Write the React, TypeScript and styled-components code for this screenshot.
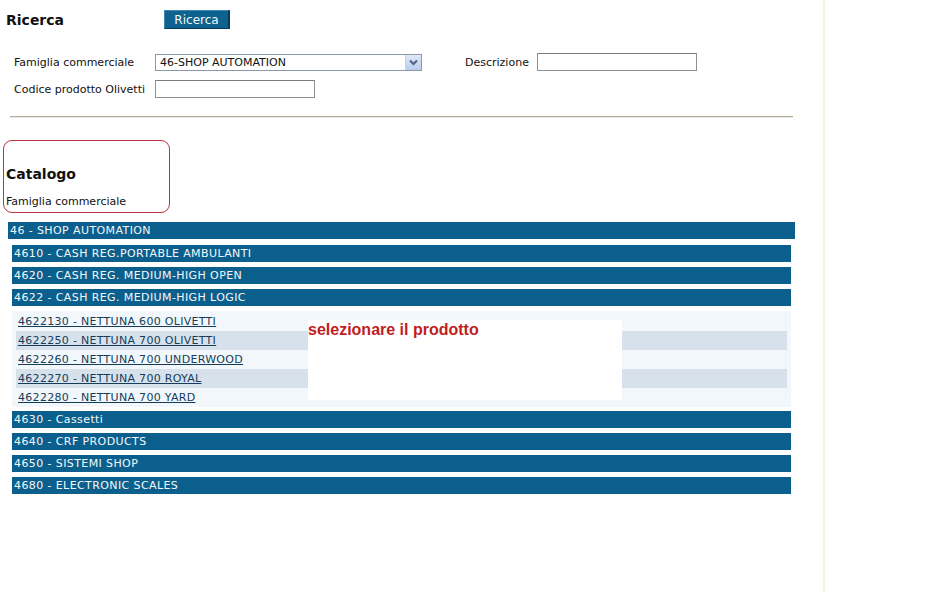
import React from "react";
import styled, { createGlobalStyle } from "styled-components";

const Global = createGlobalStyle`
  html, body { margin: 0; padding: 0; background: #ffffff; }
  body { font-family: "DejaVu Sans", Verdana, sans-serif; font-size: 11px; color: #000; }
`;

const Page = styled.div`
  width: 823px;
  min-height: 592px;
  border-right: 2px solid #f3f0e4;
  box-sizing: content-box;
`;

const Header = styled.div`
  display: flex;
  align-items: center;
  padding: 10px 0 0 6px;
  height: 19px;
`;

const Title = styled.h1`
  margin: 0;
  width: 158px;
  flex: none;
  font-size: 14px;
  font-weight: bold;
  color: #111;
`;

const SearchButton = styled.button`
  width: 66px;
  height: 19px;
  padding: 0;
  background: #0d6290;
  color: #f4f8fb;
  font-family: "DejaVu Sans", Verdana, sans-serif;
  font-size: 12px;
  border: none;
  border-right: 2px solid #0a3c5a;
  border-bottom: 1px solid #0a3c5a;
  border-top: 1px solid #3f86b0;
  border-left: 1px solid #3f86b0;
`;

const Form = styled.div`
  display: flex;
  flex-direction: column;
  gap: 9px;
  margin-top: 24px;
`;

const FormRow = styled.div`
  display: flex;
  align-items: center;
  height: 18px;
`;

const Label = styled.span<{ $w: number; $pl?: number }>`
  flex: none;
  width: ${(p) => p.$w}px;
  padding-left: ${(p) => p.$pl ?? 0}px;
  box-sizing: border-box;
  color: #111;
  white-space: nowrap;
`;

const SelectBox = styled.div`
  flex: none;
  width: 267px;
  height: 17px;
  border: 1px solid #8c99a8;
  box-sizing: border-box;
  display: flex;
  align-items: center;
  justify-content: space-between;
  padding-left: 4px;
  background: #fff;
  color: #111;
`;

const SelectArrow = styled.div`
  width: 15px;
  height: 15px;
  background: linear-gradient(#dfe9f8, #b9cdec);
  border-left: 1px solid #c3d2ea;
  display: flex;
  align-items: center;
  justify-content: center;
`;

const TextInput = styled.div<{ $w: number }>`
  flex: none;
  width: ${(p) => p.$w}px;
  height: 18px;
  border: 1px solid #8f9090;
  border-top-color: #7c7c7c;
  box-sizing: border-box;
  background: #fff;
`;

const Spacer = styled.div<{ $w: number }>`
  width: ${(p) => p.$w}px;
  flex: none;
`;

const Divider = styled.div`
  margin: 18px 0 0 10px;
  width: 783px;
  border-top: 1px solid #b2aa98;
  border-bottom: 1px solid #ece8df;
`;

const CatalogBox = styled.div`
  margin: 22px 0 0 3px;
  width: 167px;
  height: 73px;
  border: 1px solid #c0303c;
  border-radius: 9px;
  box-sizing: border-box;
  padding: 25px 0 0 2px;
`;

const CatalogTitle = styled.h2`
  margin: 0;
  font-size: 14px;
  font-weight: bold;
  color: #111;
`;

const CatalogSub = styled.div`
  margin-top: 13px;
  color: #111;
`;

const Tree = styled.div`
  margin: 9px 0 0 8px;
  width: 787px;
  display: flex;
  flex-direction: column;
`;

const Bar = styled.div<{ $sub?: boolean; $top?: number }>`
  height: 17px;
  line-height: 18px;
  background: #0b5f8c;
  color: #f4f8fb;
  padding-left: 2px;
  margin: ${(p) => (p.$sub ? `${p.$top ?? 5}px 4px 0 4px` : "0")};
  letter-spacing: 0.4px;
  white-space: nowrap;
`;

const ProductList = styled.div`
  position: relative;
  margin: 5px 4px 0 4px;
  padding: 1px 4px 0 4px;
  background: #f2f7fb;
  display: flex;
  flex-direction: column;
`;

const ProductRow = styled.div<{ $alt: boolean }>`
  height: 19px;
  line-height: 19px;
  background: ${(p) => (p.$alt ? "#d7e1ec" : "transparent")};
  padding-left: 2px;
`;

const ProductLink = styled.a`
  color: #153d5a;
  text-decoration: underline;
  letter-spacing: 0.3px;
`;

const Notice = styled.div`
  position: absolute;
  left: 296px;
  top: 9px;
  width: 314px;
  height: 80px;
  background: #ffffff;
  color: #c01e1e;
  font-family: "Liberation Sans", Arial, sans-serif;
  font-size: 16px;
  font-weight: bold;
  line-height: 19px;
`;

const topBars = [
  "4610 - CASH REG.PORTABLE AMBULANTI",
  "4620 - CASH REG. MEDIUM-HIGH OPEN",
  "4622 - CASH REG. MEDIUM-HIGH LOGIC",
];
const products = [
  "4622130 - NETTUNA 600 OLIVETTI",
  "4622250 - NETTUNA 700 OLIVETTI",
  "4622260 - NETTUNA 700 UNDERWOOD",
  "4622270 - NETTUNA 700 ROYAL",
  "4622280 - NETTUNA 700 YARD",
];
const bottomBars = [
  "4630 - Cassetti",
  "4640 - CRF PRODUCTS",
  "4650 - SISTEMI SHOP",
  "4680 - ELECTRONIC SCALES",
];

export default function App() {
  return (
    <>
      <Global />
      <Page>
        <Header>
          <Title>Ricerca</Title>
          <SearchButton>Ricerca</SearchButton>
        </Header>
        <Form>
          <FormRow>
            <Label $w={155} $pl={14}>Famiglia commerciale</Label>
            <SelectBox>
              <span>46-SHOP AUTOMATION</span>
              <SelectArrow>
                <svg width="9" height="7" viewBox="0 0 9 7">
                  <path d="M1 1.5 L4.5 5 L8 1.5" fill="none" stroke="#4d6185" strokeWidth="2" />
                </svg>
              </SelectArrow>
            </SelectBox>
            <Spacer $w={43} />
            <Label $w={72}>Descrizione</Label>
            <TextInput $w={160} />
          </FormRow>
          <FormRow>
            <Label $w={155} $pl={14}>Codice prodotto Olivetti</Label>
            <TextInput $w={160} />
          </FormRow>
        </Form>
        <Divider />
        <CatalogBox>
          <CatalogTitle>Catalogo</CatalogTitle>
          <CatalogSub>Famiglia commerciale</CatalogSub>
        </CatalogBox>
        <Tree>
          <Bar>46 - SHOP AUTOMATION</Bar>
          {topBars.map((t, i) => (
            <Bar $sub $top={i === 0 ? 6 : 5} key={t}>{t}</Bar>
          ))}
          <ProductList>
            {products.map((p, i) => (
              <ProductRow $alt={i % 2 === 1} key={p}>
                <ProductLink href="#">{p}</ProductLink>
              </ProductRow>
            ))}
            <Notice>selezionare il prodotto</Notice>
          </ProductList>
          {bottomBars.map((t, i) => (
            <Bar $sub $top={i === 0 ? 4 : 5} key={t}>{t}</Bar>
          ))}
        </Tree>
      </Page>
    </>
  );
}
